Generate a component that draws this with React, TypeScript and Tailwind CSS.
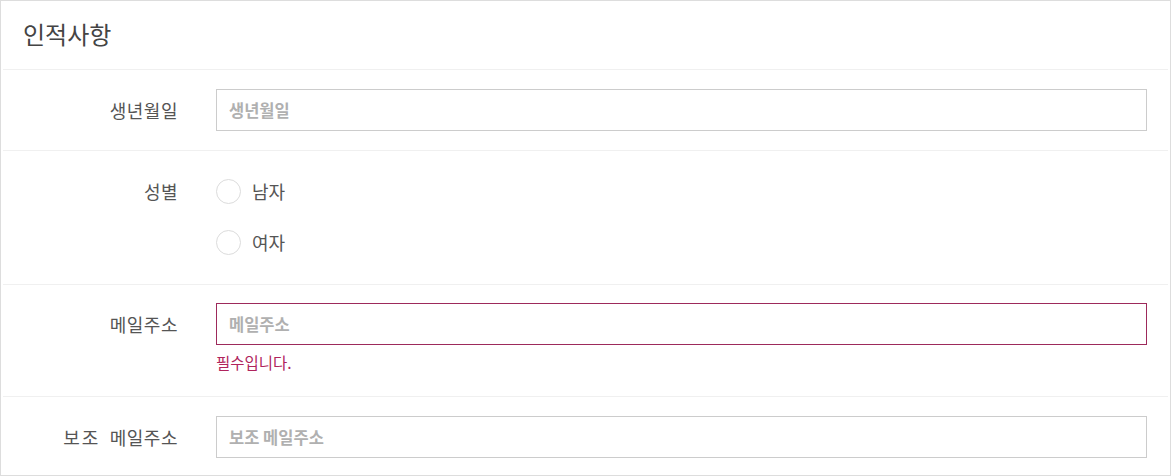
import React from "react";

const font = { fontFamily: '"Noto Sans CJK KR", "Noto Sans", sans-serif' };

function Label({ children }: { children: React.ReactNode }) {
  return (
    <div className="w-[177px] shrink-0 text-right text-[18px] leading-[42px] tracking-[0.5px] text-[#555]">
      {children}
    </div>
  );
}

function Input({ placeholder, error }: { placeholder: string; error?: boolean }) {
  return (
    <input
      placeholder={placeholder}
      className={
        error
          ? "block h-[42px] w-full border border-[#9d2a5b] bg-white px-[12px] text-[16.5px] font-semibold text-[#555] outline-none placeholder:text-[#b0b0b0]"
          : "block h-[42px] w-full border border-[#cccccc] bg-white px-[12px] text-[16.5px] font-semibold text-[#555] outline-none placeholder:text-[#b0b0b0]"
      }
    />
  );
}

function Radio({ label }: { label: string }) {
  return (
    <label className="flex h-[42px] items-center gap-[11px]">
      <span className="block h-[25px] w-[25px] rounded-full border border-[#dcdcdc] bg-white" />
      <span className="text-[18px] text-[#555]">{label}</span>
    </label>
  );
}

export default function App() {
  return (
    <div style={font} className="h-[476px] w-[1171px] bg-white">
      <div className="h-[476px] border border-[#dddddd] bg-white">
        <div className="flex h-[68px] items-center px-[22px]">
          <h2 className="mb-[3px] text-[24px] font-normal text-[#444]">인적사항</h2>
        </div>
        <div className="mx-[2px] border-t border-[#f0f0f0]" />
        <div className="flex gap-[38px] pt-[19px] pb-[19px] pr-[23px]">
          <Label>생년월일</Label>
          <div className="flex-1">
            <Input placeholder="생년월일" />
          </div>
        </div>
        <div className="mx-[2px] border-t border-[#f0f0f0]" />
        <div className="flex gap-[38px] pt-[19px] pb-[21px] pr-[23px]">
          <Label>성별</Label>
          <div className="flex flex-1 flex-col gap-[9px]">
            <Radio label="남자" />
            <Radio label="여자" />
          </div>
        </div>
        <div className="mx-[2px] border-t border-[#f0f0f0]" />
        <div className="flex gap-[38px] pt-[18px] pb-[22px] pr-[23px]">
          <Label>메일주소</Label>
          <div className="flex-1">
            <Input placeholder="메일주소" error />
            <p className="mt-[5px] text-[15.5px] leading-[24px] text-[#b0245c]">필수입니다.</p>
          </div>
        </div>
        <div className="mx-[2px] border-t border-[#f0f0f0]" />
        <div className="flex gap-[38px] pt-[19px] pb-[17px] pr-[23px]">
          <Label>
            <span className="tracking-[2px]">보조</span>
            {"\u2002"}메일주소
          </Label>
          <div className="flex-1">
            <Input placeholder="보조 메일주소" />
          </div>
        </div>
      </div>
    </div>
  );
}
